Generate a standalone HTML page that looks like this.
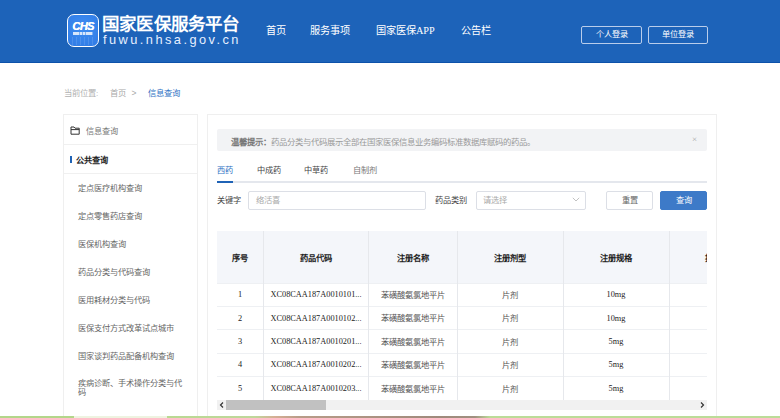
<!DOCTYPE html>
<html lang="zh-CN">
<head>
<meta charset="utf-8">
<style>
*{margin:0;padding:0;box-sizing:border-box}
html,body{width:780px;height:418px;overflow:hidden;background:#fff}
body{position:relative;font-family:"Liberation Serif",serif;color:#333}
.a{position:absolute;white-space:nowrap;line-height:1}
#hdr{position:absolute;left:0;top:0;width:780px;height:63px;background:#1d63b9;border-bottom:1.5px solid #0d52aa}
#logo{position:absolute;left:67px;top:13.5px;width:32px;height:33.5px;border:1.6px solid #fff;border-radius:7px;background:radial-gradient(circle at 50% 40%,#3f8ef2,#2f7ae4)}
#title{left:102px;top:15.5px;font-family:"Liberation Sans",sans-serif;font-weight:bold;font-size:17.5px;letter-spacing:0.2px;color:#fff}
#dom{left:103px;top:34px;font-family:"Liberation Sans",sans-serif;font-size:12.8px;letter-spacing:2.45px;color:#e6efff}
.nav{top:25.5px;font-size:10.2px;color:#fff}
.btn{position:absolute;top:26px;height:18px;width:61px;border:1px solid #b9cdeb;border-radius:2px;color:#fff;font-size:8.2px;text-align:center;line-height:15px}
.crumb{top:89.5px;font-size:8.3px}
#side{position:absolute;left:63px;top:114px;width:135px;height:320px;border:1px solid #efefef}
.sdiv{position:absolute;left:0;width:133px;height:1px;background:#f0f0f0}
.si{left:78px;font-size:8.2px;color:#666}
#panel{position:absolute;left:207px;top:114px;width:510px;height:320px;border:1px solid #efefef}
#alert{position:absolute;left:217px;top:129px;width:490px;height:22px;background:#f2f3f5;border-radius:2px}
.tab{top:167px;font-size:8.2px;color:#444}
.lbl{font-size:8.2px;color:#444}
.inp{position:absolute;height:19px;border:1px solid #dcdfe6;border-radius:2px}
.ph{font-size:8.3px;color:#aaa}
table{position:absolute;left:217px;top:231px;border-collapse:collapse;table-layout:fixed}
td,th{font-size:8.3px;text-align:center;overflow:hidden;white-space:nowrap;padding:0}
th{height:52px;background:#f4f6fa;font-weight:bold;color:#222;border-right:1px solid #e6e8ec}
td.c{color:#555;padding-bottom:1.5px}
td{height:23.4px;border-top:1px solid #eef0f3;border-right:1px solid #e6e8ec;color:#222}
</style>
</head>
<body>
<div id="hdr"></div>
<div id="logo"><div style="position:absolute;left:2px;top:6px;width:26px;text-align:center;font-family:'Liberation Sans',sans-serif;font-weight:bold;font-style:italic;font-size:10.5px;line-height:10px;color:#fff;letter-spacing:-0.6px;transform:scaleX(1.05);text-shadow:0.3px 0 0 #fff">CHS</div><div style="position:absolute;left:5px;top:17.5px;width:20px;height:3px;background:repeating-linear-gradient(90deg,rgba(255,255,255,.8) 0 2.5px,rgba(255,255,255,.35) 2.5px 3.3px)"></div><div style="position:absolute;left:4px;top:22.5px;width:23px;height:8px;background:repeating-linear-gradient(90deg,rgba(255,255,255,.12) 0 1px,transparent 1px 4px)"></div></div>
<div class="a" id="title">国家医保服务平台</div>
<div class="a" id="dom">fuwu.nhsa.gov.cn</div>
<div class="a nav" style="left:266px">首页</div>
<div class="a nav" style="left:310px">服务事项</div>
<div class="a nav" style="left:376px">国家医保APP</div>
<div class="a nav" style="left:461px">公告栏</div>
<div class="btn" style="left:581px">个人登录</div>
<div class="btn" style="left:648px;width:60px">单位登录</div>

<div class="a crumb" style="left:64px;color:#b0b0b0">当前位置:</div>
<div class="a crumb" style="left:110px;color:#a8a8a8">首页</div><div class="a crumb" style="left:131.5px;top:89px;color:#aaa;font-family:'Liberation Sans',sans-serif;font-size:8.5px">&gt;</div>
<div class="a crumb" style="left:148px;color:#2f72c4">信息查询</div>

<div id="side"></div>
<svg style="position:absolute;left:70px;top:125px" width="11" height="11" viewBox="0 0 11 11"><path d="M1 2 H4 L5 3.2 H9.2 V9.2 H1 Z M1 4.6 H9.2" fill="none" stroke="#333" stroke-width="1" stroke-linejoin="round"/></svg><div class="a si" style="left:86px;top:127.5px;color:#777">信息查询</div>
<div class="sdiv" style="left:64px;top:144px"></div>
<div style="position:absolute;left:70px;top:156px;width:2.4px;height:7px;background:#1f63b6"></div>
<div class="a si" style="left:76px;top:156.5px;font-weight:bold;color:#222">公共查询</div>
<div class="sdiv" style="left:64px;top:173px"></div>
<div class="a si" style="top:184.75px">定点医疗机构查询</div>
<div class="a si" style="top:212.75px">定点零售药店查询</div>
<div class="a si" style="top:240.75px">医保机构查询</div>
<div class="a si" style="top:268.75px">药品分类与代码查询</div>
<div class="a si" style="top:296.75px">医用耗材分类与代码</div>
<div class="a si" style="top:324.75px">医保支付方式改革试点城市</div>
<div class="a si" style="top:352.75px">国家谈判药品配备机构查询</div>
<div class="a si" style="top:379.75px">疾病诊断、手术操作分类与代</div>
<div class="a si" style="top:388.75px">码</div>

<div id="panel"></div>
<div id="alert"></div>
<div class="a" style="left:231px;top:138.5px;font-size:8.35px;color:#999"><b style="color:#777">温馨提示：</b>药品分类与代码展示全部在国家医保信息业务编码标准数据库赋码的药品。</div>
<div class="a" style="left:692px;top:135px;font-size:9px;color:#aaa">×</div>

<div style="position:absolute;left:217px;top:181px;width:490px;height:1.5px;background:#e4e7ed"></div>
<div style="position:absolute;left:217px;top:180.5px;width:16px;height:2px;background:#1f63b6"></div>
<div class="a tab" style="left:217px;color:#2f72c4">西药</div>
<div class="a tab" style="left:257px">中成药</div>
<div class="a tab" style="left:304px">中草药</div>
<div class="a tab" style="left:353px;color:#777">自制剂</div>

<div class="a lbl" style="left:217px;top:196.5px">关键字</div>
<div class="inp" style="left:248px;top:190.5px;width:178px"></div>
<div class="a ph" style="left:256px;top:197px">络活喜</div>
<div class="a lbl" style="left:435px;top:196.5px">药品类别</div>
<div class="inp" style="left:476px;top:190.5px;width:110px"></div>
<div class="a ph" style="left:483px;top:197px">请选择</div><svg style="position:absolute;left:572px;top:197px" width="8" height="5" viewBox="0 0 8 5"><path d="M0.8 0.8 L4 4 L7.2 0.8" fill="none" stroke="#bbb" stroke-width="0.9"/></svg>
<div class="btn" style="left:606px;top:190.5px;width:47px;height:19.5px;border-color:#dcdfe6;color:#666;line-height:17px">重置</div>
<div class="btn" style="left:660px;top:190.5px;width:47px;height:19.5px;border-color:#3d7ac8;background:#3d7ac8;color:#fff;line-height:17px">查询</div>

<div style="position:absolute;left:217px;top:231px;width:490px;height:169px;overflow:hidden">
<table style="left:0;top:0;width:556px">
<colgroup><col style="width:46.5px"><col style="width:105px"><col style="width:88.5px"><col style="width:106px"><col style="width:106px"><col style="width:104px"></colgroup>
<tr><th>序号</th><th>药品代码</th><th>注册名称</th><th>注册剂型</th><th>注册规格</th><th>批准文号</th></tr>
<tr><td>1</td><td>XC08CAA187A0010101...</td><td class="c">苯磺酸氨氯地平片</td><td class="c">片剂</td><td>10mg</td><td></td></tr>
<tr><td>2</td><td>XC08CAA187A0010102...</td><td class="c">苯磺酸氨氯地平片</td><td class="c">片剂</td><td>10mg</td><td></td></tr>
<tr><td>3</td><td>XC08CAA187A0010201...</td><td class="c">苯磺酸氨氯地平片</td><td class="c">片剂</td><td>5mg</td><td></td></tr>
<tr><td>4</td><td>XC08CAA187A0010202...</td><td class="c">苯磺酸氨氯地平片</td><td class="c">片剂</td><td>5mg</td><td></td></tr>
<tr><td>5</td><td>XC08CAA187A0010203...</td><td class="c">苯磺酸氨氯地平片</td><td class="c">片剂</td><td>5mg</td><td></td></tr>
</table>
</div>
<div style="position:absolute;left:217px;top:400px;width:490px;height:10px;background:#f1f1f1"></div>
<div style="position:absolute;left:226px;top:400px;width:100px;height:10px;background:#c1c1c1"></div>
<svg style="position:absolute;left:217px;top:400px" width="10" height="10" viewBox="0 0 10 10"><path d="M6 2.5 L3.5 5 L6 7.5" fill="none" stroke="#333" stroke-width="1.2"/></svg>
<svg style="position:absolute;left:697px;top:400px" width="10" height="10" viewBox="0 0 10 10"><path d="M4 2.5 L6.5 5 L4 7.5" fill="none" stroke="#333" stroke-width="1.2"/></svg>
<div style="position:absolute;left:0;top:416px;width:780px;height:2px;background:linear-gradient(90deg,#b3d68a 0,#b3d68a 74px,#eef3e0 74px,#eef3e0 167px,#b9d992 167px,#bfd79a 255px,#d5ae94 275px,#b89c88 300px,#9f8a7c 440px,#a09080 475px,#bcdc98 490px,#bcdc98 780px)"></div>
</body>
</html>
